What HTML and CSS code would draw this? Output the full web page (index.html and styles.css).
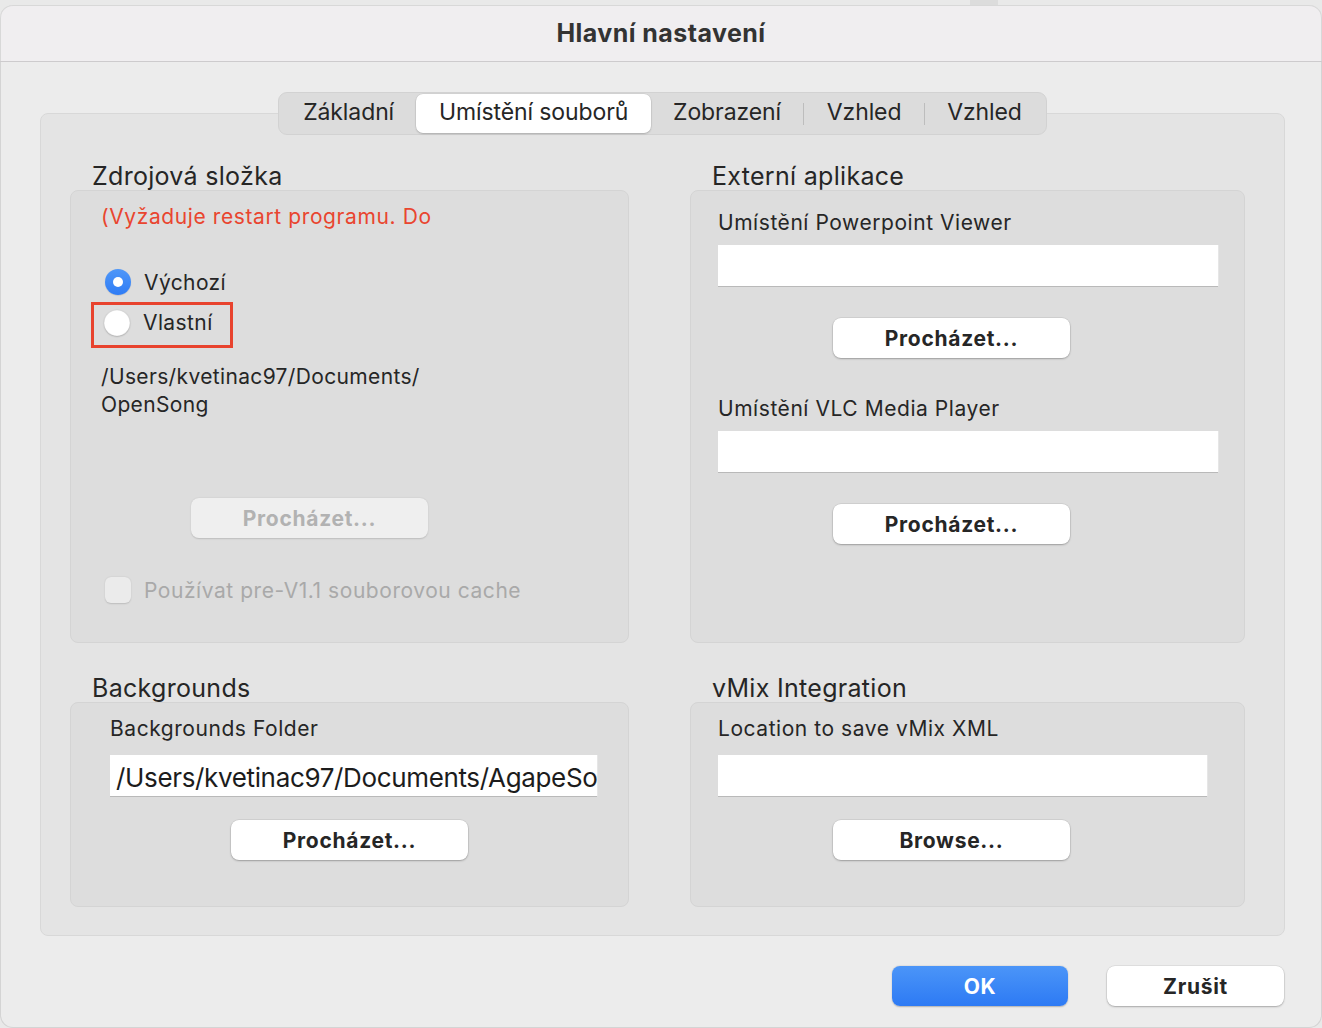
FILE: index.html
```html
<!DOCTYPE html>
<html lang="cs">
<head>
<meta charset="utf-8">
<title>Hlavní nastavení</title>
<link rel="stylesheet" href="styles.css">
</head>
<body>
<div class="behind"></div>
<div class="window">
  <div class="titlebar">Hlavní nastavení</div>
  <div class="content">
    <div class="tabs">
      <div class="segmented">
        <div class="seg">Základní</div>
        <div class="seg active">Umístění souborů</div>
        <div class="seg">Zobrazení</div>
        <div class="sep"></div>
        <div class="seg">Vzhled</div>
        <div class="sep"></div>
        <div class="seg">Vzhled</div>
      </div>
    </div>
    <div class="panel">
      <div class="grid">
        <section class="group">
          <h2 class="group-title">Zdrojová složka</h2>
          <div class="box box-tall box-source">
            <div class="warning">(Vyžaduje restart programu. Do</div>
            <div class="radio-row radio-first">
              <span class="radio checked"></span>
              <span class="radio-label">Výchozí</span>
            </div>
            <div class="radio-row highlight">
              <span class="radio"></span>
              <span class="radio-label">Vlastní</span>
            </div>
            <div class="path">/Users/kvetinac97/Documents/<br>OpenSong</div>
            <div class="btn disabled btn-source">Procházet...</div>
            <div class="check-row">
              <span class="checkbox"></span>
              <span class="check-label">Používat pre-V1.1 souborovou cache</span>
            </div>
          </div>
        </section>
        <section class="group">
          <h2 class="group-title">Externí aplikace</h2>
          <div class="box box-tall box-ext">
            <div class="label">Umístění Powerpoint Viewer</div>
            <div class="input input-ext"></div>
            <div class="btn btn-ext">Procházet...</div>
            <div class="label label-second">Umístění VLC Media Player</div>
            <div class="input input-ext"></div>
            <div class="btn btn-ext">Procházet...</div>
          </div>
        </section>
        <section class="group group-row2">
          <h2 class="group-title">Backgrounds</h2>
          <div class="box box-short box-bg">
            <div class="label label-bg">Backgrounds Folder</div>
            <div class="input input-bg"><span class="input-text">/Users/kvetinac97/Documents/AgapeSo</span></div>
            <div class="btn btn-bg">Procházet...</div>
          </div>
        </section>
        <section class="group group-row2">
          <h2 class="group-title">vMix Integration</h2>
          <div class="box box-short box-vmix">
            <div class="label">Location to save vMix XML</div>
            <div class="input input-vmix"></div>
            <div class="btn btn-ext btn-vmix">Browse...</div>
          </div>
        </section>
      </div>
    </div>
    <div class="footer">
      <div class="btn btn-ok">OK</div>
      <div class="btn btn-cancel">Zrušit</div>
    </div>
  </div>
</div>
</body>
</html>
```

FILE: styles.css
```css
* { box-sizing: border-box; }

html, body {
  margin: 0;
  padding: 0;
}

body {
  width: 1322px;
  height: 1028px;
  overflow: hidden;
  background: #e9e9e9;
  font-family: Inter, "Noto Sans", "Liberation Sans", sans-serif;
  color: #262626;
  position: relative;
}

.behind {
  position: absolute;
  left: 970px;
  top: 0;
  width: 28px;
  height: 6px;
  background: #dcdcdc;
}

.window {
  margin-top: 5px;
  height: 1023px;
  background: #ececec;
  border-radius: 13px;
  box-shadow: inset 0 0 0 1px #d4d4d4;
  overflow: hidden;
  position: relative;
  display: flex;
  flex-direction: column;
}

.titlebar {
  height: 57px;
  flex: none;
  background: #f0eef0;
  border-bottom: 1px solid #cdcbcd;
  border-radius: 13px 13px 0 0;
  box-shadow: inset 0 1px 0 #d8d8d8, inset 1px 0 0 #d8d8d8, inset -1px 0 0 #d8d8d8;
  display: flex;
  align-items: center;
  justify-content: center;
  font-size: 25px;
  font-weight: 700;
  color: #333;
  letter-spacing: 0.45px;
}

.content {
  padding: 30px 37px 0 40px;
  display: flex;
  flex-direction: column;
}

.tabs {
  display: flex;
  justify-content: center;
  position: relative;
  z-index: 1;
  height: 43px;
}

.segmented {
  display: flex;
  align-items: center;
  height: 43px;
  padding: 2px;
  background: #dcdcdc;
  border: 1px solid #d2d2d2;
  border-radius: 9px;
}

.seg {
  height: 39px;
  padding: 0 22.4px 3px;
  display: flex;
  align-items: center;
  font-size: 23px;
  color: #262626;
  letter-spacing: -0.1px;
  border-radius: 7px;
}

.seg.active {
  background: #ffffff;
  box-shadow: 0 1px 2px rgba(0,0,0,0.18), 0 0 0 0.5px rgba(0,0,0,0.08);
}

.sep {
  width: 1px;
  height: 22px;
  background: #bdbdbd;
}

.panel {
  margin-top: -22px;
  height: 823px;
  background: #e4e4e4;
  border: 1px solid #d8d8d8;
  border-radius: 8px;
  padding: 46px 39px 0 29px;
}

.grid {
  display: grid;
  grid-template-columns: 559px 555px;
  column-gap: 61px;
  row-gap: 29px;
}

.group-title {
  margin: 0;
  height: 30px;
  padding-left: 22px;
  font-size: 25px;
  font-weight: 400;
  line-height: 32px;
  color: #262626;
  letter-spacing: 0.3px;
  white-space: nowrap;
}

.box {
  background: #dddddd;
  border: 1px solid #d4d4d4;
  border-radius: 8px;
  display: flex;
  flex-direction: column;
  align-items: flex-start;
}

.box-tall { height: 453px; }
.box-short { height: 205px; }

.box-source { padding: 13px 0 0 30px; }

.warning {
  font-size: 21px;
  line-height: 26px;
  color: #e9452f;
  letter-spacing: 0.6px;
}

.radio-row {
  display: flex;
  align-items: center;
  height: 28px;
  font-size: 21px;
  margin-left: 4px;
}

.radio-first { margin-top: 38px; }

.radio {
  width: 26px;
  height: 26px;
  border-radius: 50%;
  background: #ffffff;
  box-shadow: 0 0.5px 1.5px rgba(0,0,0,0.3), inset 0 0 0 0.5px rgba(0,0,0,0.08);
  margin-right: 13px;
  flex: none;
  display: flex;
  align-items: center;
  justify-content: center;
}

.radio.checked {
  background: linear-gradient(#4f97f8, #2f7cf5);
  box-shadow: 0 0.5px 1px rgba(0,0,0,0.2);
}

.radio.checked::after {
  content: "";
  width: 10px;
  height: 10px;
  border-radius: 50%;
  background: #ffffff;
}

.radio-label { letter-spacing: 0.4px; }

.highlight {
  margin-left: -10px;
  margin-top: 6px;
  height: 46px;
  align-items: flex-start;
  border: 3px solid #e8432e;
  padding: 5px 17px 0 10px;
}

.path {
  margin-top: 15px;
  font-size: 21px;
  line-height: 28px;
  letter-spacing: 0.35px;
}

.btn {
  display: flex;
  align-items: center;
  justify-content: center;
  width: 237px;
  height: 40px;
  background: #ffffff;
  border-radius: 8px;
  box-shadow: 0 1px 2px rgba(0,0,0,0.25), 0 0 0 0.5px rgba(0,0,0,0.1);
  font-size: 21px;
  font-weight: 700;
  color: #262626;
  letter-spacing: 0.7px;
  flex: none;
}

.btn.disabled {
  background: #efefef;
  color: #b2b2b2;
  box-shadow: 0 0.5px 1.5px rgba(0,0,0,0.15);
}

.btn-source {
  margin-top: 79px;
  margin-left: 90px;
}

.check-row {
  display: flex;
  align-items: center;
  margin-top: 38px;
  margin-left: 4px;
  height: 28px;
}

.checkbox {
  width: 26px;
  height: 26px;
  border-radius: 6px;
  background: #ebebeb;
  box-shadow: 0 0.5px 1.5px rgba(0,0,0,0.15);
  margin-right: 13px;
}

.check-label {
  font-size: 21px;
  color: #a9a9a9;
  letter-spacing: 0.55px;
}

.box-ext { padding: 19px 0 0 27px; }

.label {
  font-size: 21px;
  line-height: 26px;
  letter-spacing: 0.55px;
  color: #262626;
}

.input {
  background: #ffffff;
  height: 41px;
  box-shadow: 0 1px 0 #b9b9b9, 1px 0 0 #e6e6e6;
}

.input-ext {
  width: 500px;
  margin-top: 9px;
}

.btn-ext {
  margin-top: 32px;
  margin-left: 115px;
}

.label-second { margin-top: 38px; }

.box-bg { padding: 13px 0 0 39px; }

.input-bg {
  width: 487px;
  margin-top: 13px;
  overflow: hidden;
  white-space: nowrap;
  display: flex;
  align-items: center;
  padding: 3px 0 0 6px;
}

.input-text {
  font-size: 26px;
  color: #1c1c1c;
  letter-spacing: -0.35px;
}

.btn-bg {
  margin-top: 24px;
  margin-left: 121px;
}

.box-vmix { padding: 13px 0 0 27px; }

.input-vmix {
  width: 489px;
  margin-top: 13px;
}

.btn-vmix { margin-top: 24px; }

.footer {
  display: flex;
  justify-content: flex-end;
  gap: 39px;
  margin-top: 30px;
  margin-right: 1px;
}

.btn-ok {
  width: 176px;
  background: linear-gradient(#4b95f8, #2d7af4);
  color: #ffffff;
  box-shadow: 0 0.5px 1.5px rgba(0,0,0,0.25);
}

.btn-cancel {
  width: 177px;
}
```
